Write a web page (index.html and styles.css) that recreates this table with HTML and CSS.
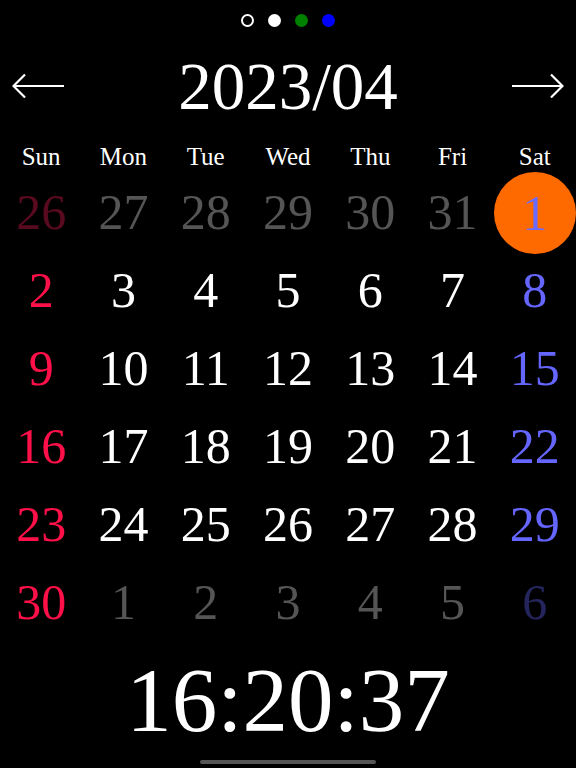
FILE: index.html
```html
<!DOCTYPE html>
<html>
<head>
<meta charset="utf-8">
<link rel="stylesheet" href="styles.css">
</head>
<body>
<div class="screen">
  <div class="dots">
    <span class="dot ring"></span>
    <span class="dot white"></span>
    <span class="dot green"></span>
    <span class="dot blue"></span>
  </div>
  <div class="header">
    <svg class="arrow" width="52" height="26" viewBox="0 0 52 26"><path d="M1.5 13 H52 M13 1.5 L1.5 13 L13 24.5" fill="none" stroke="#fff" stroke-width="2.2"/></svg>
    <div class="title">2023/04</div>
    <svg class="arrow" width="52" height="26" viewBox="0 0 52 26"><path d="M0 13 H50.5 M39 1.5 L50.5 13 L39 24.5" fill="none" stroke="#fff" stroke-width="2.2"/></svg>
  </div>
  <div class="weekdays">
    <div>Sun</div><div>Mon</div><div>Tue</div><div>Wed</div><div>Thu</div><div>Fri</div><div>Sat</div>
  </div>
  <div class="days">
    <div class="cell prev-sun">26</div><div class="cell other">27</div><div class="cell other">28</div><div class="cell other">29</div><div class="cell other">30</div><div class="cell other">31</div><div class="cell"><span class="today">1</span></div>
    <div class="cell sun">2</div><div class="cell">3</div><div class="cell">4</div><div class="cell">5</div><div class="cell">6</div><div class="cell">7</div><div class="cell sat">8</div>
    <div class="cell sun">9</div><div class="cell">10</div><div class="cell">11</div><div class="cell">12</div><div class="cell">13</div><div class="cell">14</div><div class="cell sat">15</div>
    <div class="cell sun">16</div><div class="cell">17</div><div class="cell">18</div><div class="cell">19</div><div class="cell">20</div><div class="cell">21</div><div class="cell sat">22</div>
    <div class="cell sun">23</div><div class="cell">24</div><div class="cell">25</div><div class="cell">26</div><div class="cell">27</div><div class="cell">28</div><div class="cell sat">29</div>
    <div class="cell sun">30</div><div class="cell other">1</div><div class="cell other">2</div><div class="cell other">3</div><div class="cell other">4</div><div class="cell other">5</div><div class="cell next-sat">6</div>
  </div>
  <div class="time">16:20:37</div>
  <div class="home-bar"></div>
</div>
</body>
</html>
```
FILE: styles.css
```css
html, body {
  margin: 0;
  padding: 0;
  background: #000;
}
.screen {
  width: 576px;
  height: 768px;
  display: flex;
  flex-direction: column;
  font-family: "Liberation Serif", "Times New Roman", serif;
  color: #fff;
  overflow: hidden;
}
.dots {
  height: 40px;
  display: flex;
  justify-content: center;
  align-items: center;
  gap: 14px;
}
.dot {
  width: 13px;
  height: 13px;
  border-radius: 50%;
  box-sizing: border-box;
}
.dot.ring { border: 2px solid #fff; }
.dot.white { background: #fff; }
.dot.green { background: #008000; }
.dot.blue { background: #0000ff; }
.header {
  height: 92px;
  display: flex;
  align-items: center;
  justify-content: space-between;
  padding: 0 12px;
}
.arrow { display: block; }
.title {
  font-size: 67px;
  line-height: 92px;
}
.weekdays {
  display: grid;
  grid-template-columns: repeat(7, 1fr);
  height: 41px;
  box-sizing: border-box;
  padding-top: 9px;
  font-size: 25px;
  line-height: 32px;
  text-align: center;
}
.days {
  display: grid;
  grid-template-columns: repeat(7, 1fr);
  grid-auto-rows: 78px;
  font-size: 50px;
}
.cell {
  display: flex;
  align-items: center;
  justify-content: center;
  line-height: 78px;
  color: #fff;
}
.cell.sun { color: #ff1048; }
.cell.sat { color: #6565ff; }
.cell.other { color: #555; }
.cell.prev-sun { color: #5a0a1e; }
.cell.next-sat { color: #25255e; }
.today {
  flex: none;
  width: 82px;
  height: 82px;
  border-radius: 50%;
  background: #ff6a00;
  color: #6b6bff;
  display: flex;
  align-items: center;
  justify-content: center;
  line-height: 82px;
  margin-top: 2px;
}
.time {
  height: 119px;
  font-size: 91px;
  line-height: 119px;
  text-align: center;
}
.home-bar {
  align-self: center;
  width: 176px;
  height: 4px;
  border-radius: 2px;
  background: #555;
}
```
